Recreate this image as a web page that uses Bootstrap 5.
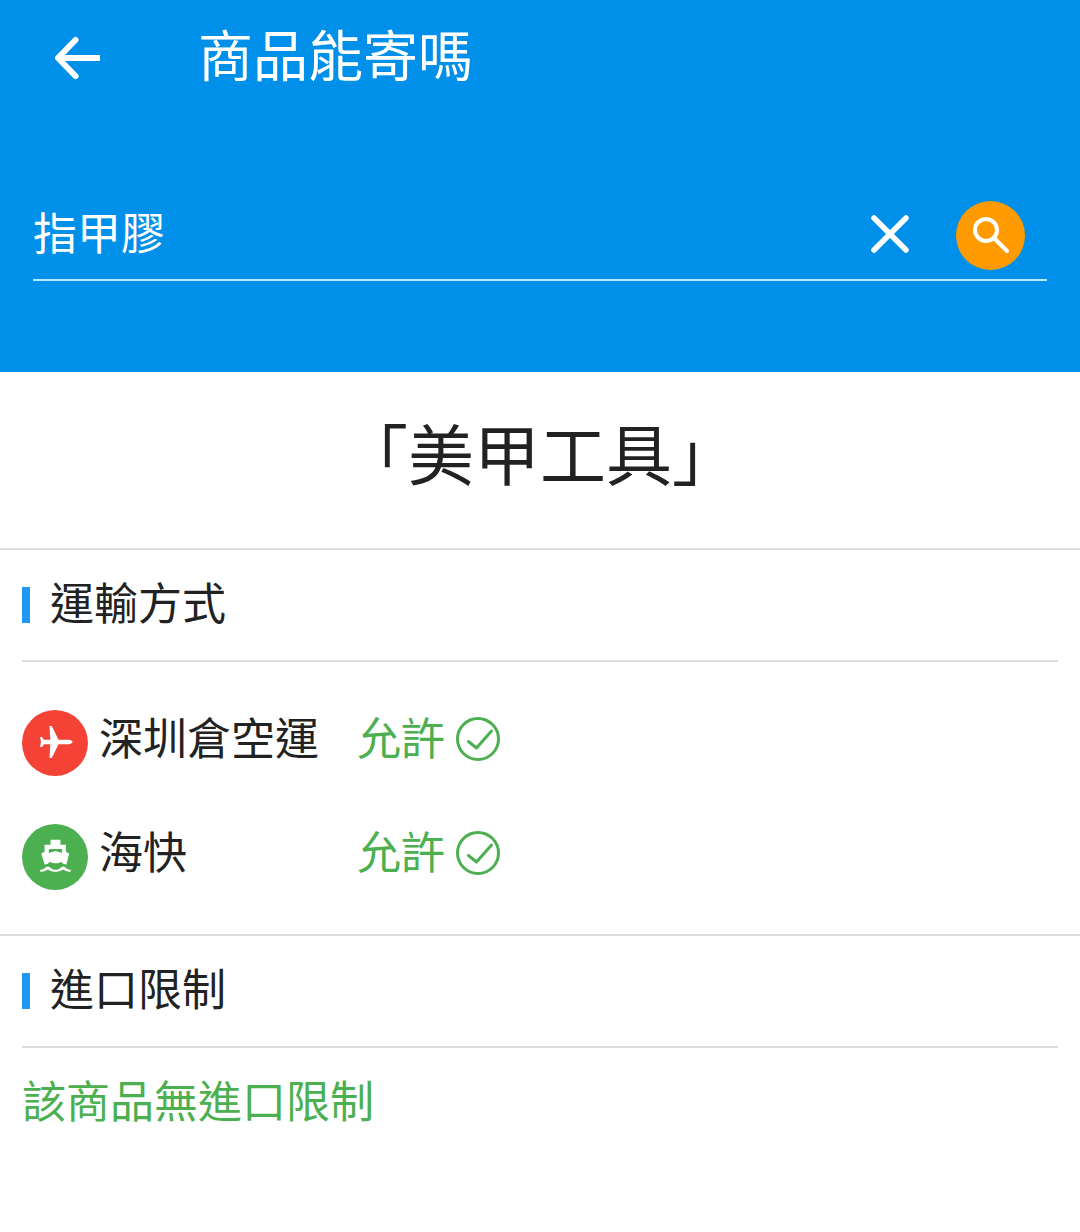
<!doctype html>
<html lang="zh-Hant">
<head>
    <meta charset="utf-8">
    <meta name="viewport" content="width=device-width, initial-scale=1">
    <title>商品能寄嗎</title>
    <link href="https://cdn.jsdelivr.net/npm/bootstrap@5.3.3/dist/css/bootstrap.min.css" rel="stylesheet">
    <style>
        body {
            font-family: "Noto Sans CJK TC", "Noto Sans CJK SC", sans-serif;
            font-size: 44px;
            line-height: 1.2;
            color: #222;
            background: #fff;
        }
        .top-area {
            height: 372px;
            background: #0090ea;
            color: #fff;
        }
        .title-row {
            height: 112px;
            padding-left: 52px;
        }
        .back-btn {
            width: 146px;
            margin-top: 4px;
        }
        .page-title {
            font-size: 55px;
            font-weight: 400;
            margin: 0 0 8px;
        }
        .search-row {
            height: 98px;
            margin: 71px 33px 0;
            padding: 0 22px 0 0;
            border-bottom: 2px solid #b5ecff;
        }
        .search-text {
            font-size: 44px;
        }
        .search-btn {
            width: 69px;
            height: 69px;
            background: #ff9a00;
            margin-left: 45px;
            margin-bottom: -8px;
        }
        .clear-btn {
            margin-bottom: -6px;
        }
        .product-name {
            height: 178px;
            font-size: 66px;
            font-weight: 400;
            margin: 0;
            padding-bottom: 16px;
            border-bottom: 2px solid #ddd;
        }
        .sec-head {
            height: 112px;
            margin: 0 22px;
            border-bottom: 2px solid #ddd;
        }
        .sec-bar {
            width: 8px;
            height: 36px;
            background: #2196f3;
            margin-right: 20px;
        }
        .sec-text {
            margin-bottom: 8px;
        }
        .ship-list {
            padding: 24px 22px 0;
            height: 274px;
            border-bottom: 2px solid #ddd;
        }
        .ship-row {
            height: 114px;
        }
        .ship-icon {
            width: 66px;
            height: 66px;
            margin-right: 11px;
        }
        .icon-air {
            background: #f44336;
        }
        .icon-sea {
            background: #4caf50;
        }
        .ship-name {
            width: 258px;
            margin-bottom: 14px;
        }
        .ok-text {
            color: #4caf50;
        }
        .ship-row .ok-text {
            margin-bottom: 14px;
        }
        .ok-mark {
            margin-left: 11px;
            margin-bottom: 8px;
        }
        .no-limit {
            margin: 25px 22px 0;
        }
    </style>
</head>
<body>
    <div class="top-area">
        <div class="title-row d-flex align-items-center">
            <div class="back-btn d-flex">
                <svg width="50" height="46" viewBox="0 0 50 46" fill="none" stroke="#fff" stroke-width="6" stroke-linejoin="round">
                    <path d="M48 23H7"/>
                    <path d="M23.500 5L6 23l17.500 18" stroke-linecap="round"/>
                </svg>
            </div>
            <h1 class="page-title">商品能寄嗎</h1>
        </div>
        <div class="search-row d-flex align-items-center">
            <div class="search-text flex-grow-1">指甲膠</div>
            <svg class="clear-btn" width="42" height="42" viewBox="0 0 42 42" fill="none" stroke="#fff" stroke-width="5.500" stroke-linecap="round">
                <path d="M5 5l32 32M37 5L5 37"/>
            </svg>
            <div class="search-btn rounded-circle d-flex align-items-center justify-content-center">
                <svg width="38" height="38" viewBox="0 0 38 38" fill="none" stroke="#fff" stroke-width="4" stroke-linecap="round">
                    <circle cx="14" cy="14" r="11"/>
                    <path d="M22 22l13 13"/>
                </svg>
            </div>
        </div>
    </div>

    <h2 class="product-name d-flex align-items-center justify-content-center">「美甲工具」</h2>

    <div class="sec-head d-flex align-items-center">
        <span class="sec-bar"></span>
        <span class="sec-text">運輸方式</span>
    </div>

    <div class="ship-list">
        <div class="ship-row d-flex align-items-center">
            <div class="ship-icon icon-air rounded-circle d-flex align-items-center justify-content-center">
                <svg width="40" height="40" viewBox="0 0 40 40" fill="#fff">
                    <path d="M37.500 19c0-1.200-2-2.200-4-2.200H23.500L16.800 3h-2.300l.8 13.800H9L7 14H5l1 5-1 5h2l2-2.800h6.300L14.500 35h2.300l6.700-13.800h10c2 0 4-1 4-2.200z"/>
                </svg>
            </div>
            <div class="ship-name">深圳倉空運</div>
            <div class="ok-text">允許</div>
            <svg class="ok-mark" width="44" height="44" viewBox="0 0 44 44" fill="none" stroke="#4caf50" stroke-width="3" stroke-linecap="round" stroke-linejoin="round">
                <circle cx="22" cy="22" r="20.500"/>
                <path d="M12.500 24.500l8 6.500 15-17"/>
            </svg>
        </div>
        <div class="ship-row d-flex align-items-center">
            <div class="ship-icon icon-sea rounded-circle d-flex align-items-center justify-content-center">
                <svg width="35" height="41.500" viewBox="0 0 32 38" fill="#fff">
                    <path fill-rule="evenodd" d="M11.500 3.500h9V8h5v6.500l3 1.500-2.500 10c-2 0-4-1-5-2.500-2 2-7 2-10 0-1 1.500-3 2.500-5 2.500L3 16l3-1.500V8h5.500zM10 12v3.500l6-1.800 6 1.800V12z"/>
                    <path d="M2 31c4 0 5-3 7-3s3 3 7 3 5-3 7-3 3 3 7 3v1.800c-4 0-6-2-7-2s-3 2-7 2-6-2-7-2-3 2-7 2z"/>
                </svg>
            </div>
            <div class="ship-name">海快</div>
            <div class="ok-text">允許</div>
            <svg class="ok-mark" width="44" height="44" viewBox="0 0 44 44" fill="none" stroke="#4caf50" stroke-width="3" stroke-linecap="round" stroke-linejoin="round">
                <circle cx="22" cy="22" r="20.500"/>
                <path d="M12.500 24.500l8 6.500 15-17"/>
            </svg>
        </div>
    </div>

    <div class="sec-head d-flex align-items-center">
        <span class="sec-bar"></span>
        <span class="sec-text">進口限制</span>
    </div>
    <div class="no-limit ok-text">該商品無進口限制</div>

    <script src="https://cdn.jsdelivr.net/npm/bootstrap@5.3.3/dist/js/bootstrap.bundle.min.js"></script>
</body>
</html>
